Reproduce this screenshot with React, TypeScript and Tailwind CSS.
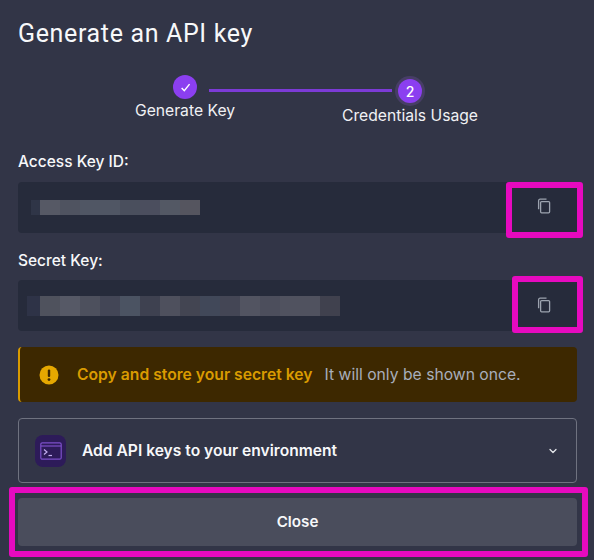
import { ChevronDown } from "lucide-react";

const accessCells = [
  "w-[9px] bg-[#2f3547]",
  "w-[20px] bg-[#565965]",
  "w-[20px] bg-[#4f5360]",
  "w-[40px] bg-[#505664]",
  "w-[20px] bg-[#4a4f5d]",
  "w-[20px] bg-[#4b4e5e]",
  "w-[20px] bg-[#535864]",
  "w-[20px] bg-[#55555f]",
];

const secretCells = [
  "w-[13px] bg-[#2e3347]",
  "w-[20px] bg-[#4f525d]",
  "w-[20px] bg-[#565966]",
  "w-[20px] bg-[#4d505d]",
  "w-[20px] bg-[#434656]",
  "w-[20px] bg-[#4b5362]",
  "w-[20px] bg-[#3e4150]",
  "w-[20px] bg-[#4e505d]",
  "w-[20px] bg-[#434552]",
  "w-[20px] bg-[#414859]",
  "w-[20px] bg-[#444655]",
  "w-[20px] bg-[#525461]",
  "w-[20px] bg-[#4c4e5c]",
  "w-[40px] bg-[#50525f]",
  "w-[20px] bg-[#40414e]",
];

function CopyIcon() {
  return (
    <svg width="14" height="16" viewBox="0 0 14 16" fill="none" stroke="#9ca3af" strokeWidth="1.3">
      <path d="M9.5 1.2H3a1.6 1.6 0 0 0-1.4 1.6v8.4" />
      <path d="M3.6 11.5V4.6a1 1 0 0 1 1-1h7a1 1 0 0 1 1 1v9.2a1 1 0 0 1-1 1h-7a1 1 0 0 1-1-1z" />
    </svg>
  );
}

function KeyField({ cells, blurClass, iconClass, highlightClass }: { cells: string[]; blurClass: string; iconClass: string; highlightClass: string }) {
  return (
    <div className="relative flex h-[51px] items-center rounded bg-[#262b3b]">
      <div className={`flex ${blurClass}`}>
        {cells.map((c, i) => (
          <div key={i} className={c} />
        ))}
      </div>
      <div className={`absolute flex justify-center ${iconClass}`}>
        <CopyIcon />
      </div>
      <div className={`absolute rounded-[3px] border-[6px] border-[#e60abf] ${highlightClass}`} />
    </div>
  );
}

export default function App() {
  return (
    <div className="h-[560px] w-[594px] overflow-hidden bg-[#323547] pl-[18px] pr-[17px] font-['Inter',sans-serif] text-white">
      <h1 className="pt-[18px] font-['Roboto',sans-serif] text-[25px] leading-[32px] tracking-[0.65px] text-[#f7f8fa]">
        Generate an API key
      </h1>

      {/* Stepper */}
      <div className="mt-[25px] flex h-[76px] items-start">
        <div className="ml-[117px] flex w-[100px] flex-col items-center">
          <div className="flex h-[24px] w-[24px] items-center justify-center rounded-full bg-[#8b3ff0]">
            <svg width="11" height="11" viewBox="0 0 10 10" fill="none" stroke="white" strokeWidth="1.3">
              <path d="M1.5 5.5l2.4 2.4 4.8-6" />
            </svg>
          </div>
          <span className="mt-[1px] whitespace-nowrap text-[15.7px] leading-[22px] text-[#f0f1f4]">Generate Key</span>
        </div>
        <div className="-ml-[26px] mt-[14px] h-[3px] w-[183px] bg-[#7c3bd6]" />
        <div className="-ml-[50px] flex w-[136px] flex-col items-center">
          <div className="mt-[1px] flex h-[30px] w-[30px] items-center justify-center rounded-full bg-[#473e66]">
            <div className="flex h-[24px] w-[24px] items-center justify-center rounded-full bg-[#8b3ff0] text-[14px] font-medium">2</div>
          </div>
          <span className="whitespace-nowrap text-[15.7px] leading-[20px] text-[#f0f1f4]">Credentials Usage</span>
        </div>
      </div>

      <div className="mt-0 text-[15.5px] font-medium leading-[22px] text-[#f7f8fa]">Access Key ID:</div>
      <div className="mt-[9px]">
        <KeyField
          cells={accessCells}
          blurClass="ml-[13px] h-[15px]"
          iconClass="right-[26px] top-[16px]"
          highlightClass="-right-[6px] -bottom-[5px] top-0 w-[77px]"
        />
      </div>

      <div className="mt-[17px] text-[15.5px] font-medium leading-[22px] text-[#f7f8fa]">Secret Key:</div>
      <div className="mt-[8px]">
        <KeyField
          cells={secretCells}
          blurClass="ml-[9px] h-[20px]"
          iconClass="right-[26px] top-[17px]"
          highlightClass="-right-[6px] -bottom-[2px] -top-[4px] w-[71px]"
        />
      </div>

      {/* Warning */}
      <div className="mt-[16px] flex h-[55px] items-center rounded border-l-2 border-[#d99b00] bg-[#3d2800] pl-[19px]">
        <svg width="20" height="20" viewBox="0 0 20 20">
          <circle cx="10" cy="10" r="9.5" fill="#e6a800" />
          <rect x="8.8" y="4.5" width="2.4" height="7.5" rx="1.1" fill="#3d2800" />
          <circle cx="10" cy="14.6" r="1.4" fill="#3d2800" />
        </svg>
        <span className="ml-[18px] text-[15.7px] font-semibold text-[#d99b00]">Copy and store your secret key</span>
        <span className="ml-[12px] text-[15.7px] text-[#a8aebb]">It will only be shown once.</span>
      </div>

      {/* Accordion */}
      <div className="mt-[16px] flex h-[65px] items-center rounded border border-[#6f7280] pl-[16px] pr-[17px]">
        <div className="flex h-[32px] w-[31px] items-center justify-center rounded-lg bg-[#2d1b59]">
          <svg width="22" height="18" viewBox="0 0 22 18" fill="none" stroke="#7c4fc9" strokeWidth="1.2">
            <rect x="0.8" y="0.8" width="20.4" height="16.4" rx="1.5" />
            <path d="M0.8 4h20.4" />
            <path d="M4 7.5l3 2.5-3 2.5" stroke="#c4aef0" />
            <path d="M8.5 13.5h3.5" stroke="#c4aef0" />
          </svg>
        </div>
        <span className="ml-[16px] flex-1 text-[15.6px] font-semibold text-[#f7f8fa]">Add API keys to your environment</span>
        <ChevronDown size={12} strokeWidth={2.5} className="text-[#e5e7eb]" />
      </div>

      {/* Close */}
      <div className="relative mt-[15px]">
        <button className="flex h-[48px] w-full items-center justify-center rounded bg-[#4a4d5c] text-[15.2px] font-semibold text-[#f7f8fa]">
          Close
        </button>
        <div className="absolute -bottom-[11px] -left-[9px] -right-[11px] -top-[11px] rounded-[3px] border-[6px] border-[#e60abf]" />
      </div>
    </div>
  );
}
